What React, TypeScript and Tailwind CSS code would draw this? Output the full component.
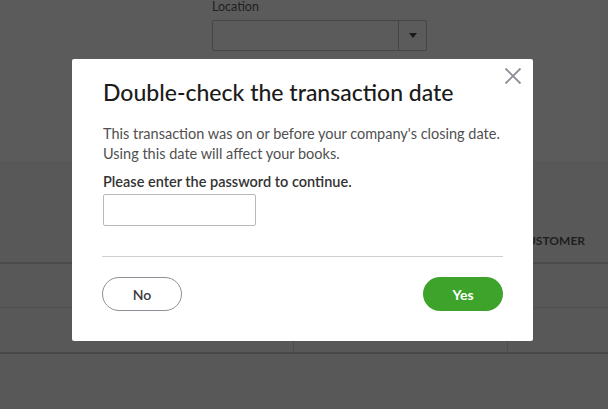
const font = { fontFamily: "Lato, 'Noto Sans', sans-serif" };

const Background = () => {
    return (
        <div className="w-full h-full flex flex-col bg-[#585858]">
            <div className="h-[161px] bg-[#5b5b5b] pl-[212px] pt-0">
                <div className="text-[12.5px] leading-[14px] text-[#1f1f1f]">Location</div>
                <div className="mt-[6px] w-[215px] h-[31px] border border-[#454545] rounded-[2px] flex">
                    <div className="flex-1"></div>
                    <div className="w-[28px] border-l border-[#454545] flex items-center justify-center">
                        <div className="w-0 h-0 border-l-[4px] border-r-[4px] border-t-[5px] border-l-transparent border-r-transparent border-t-[#1a1a1a]"></div>
                    </div>
                </div>
            </div>
            <div className="h-[101px] flex items-end justify-end pb-[12px] pr-[23px]">
                <span className="text-[12px] font-bold text-[#1e1e1e]">CUSTOMER</span>
            </div>
            <div className="h-[2px] bg-[#4b4b4b]"></div>
            <div className="h-[44px] border-b border-[#4d4d4d]"></div>
            <div className="h-[44px] flex">
                <div className="w-[294px] border-r border-dotted border-[#444]"></div>
                <div className="w-[214px] border-r border-dotted border-[#444]"></div>
                <div className="flex-1"></div>
            </div>
            <div className="h-[2px] bg-[#484848]"></div>
            <div className="flex-1"></div>
        </div>
    );
};

export default function App() {
    return (
        <div className="relative w-[608px] h-[409px] overflow-hidden" style={font}>
            <Background />
            <div className="absolute left-[72px] top-[59px] w-[461px] h-[282px] bg-white rounded-[2px] px-[30px] pt-[18px]">
                <button className="absolute left-[432px] top-[8px]">
                    <svg width="18" height="18" viewBox="0 0 18 18" fill="none" stroke="#8d9096" strokeWidth="1.8">
                        <path d="M1.5 1.5 16.5 16.5M16.5 1.5 1.5 16.5" />
                    </svg>
                </button>
                <h2 className="text-[23px] leading-[30px] text-[#1b1b1b] font-medium pl-[1px]">
                    Double-check the transaction date
                </h2>
                <p className="mt-[17px] text-[14.5px] leading-[20px] text-[#505050] pl-[1px]">
                    This transaction was on or before your company's closing date.
                    <br />
                    Using this date will affect your books.
                </p>
                <p className="mt-[8px] text-[14.5px] leading-[20px] font-semibold text-[#333] pl-[1px]">
                    Please enter the password to continue.
                </p>
                <input
                    type="password"
                    className="block mt-[2px] ml-[1px] w-[153px] h-[32px] border border-[#bababa] rounded-[2px] outline-none"
                />
                <div className="mt-[30px] h-px bg-[#cfcfcf]"></div>
                <div className="mt-[20px] flex justify-between">
                    <button className="w-[80px] h-[34px] rounded-full border border-[#8d9096] text-[14px] font-semibold text-[#393a3d]">
                        No
                    </button>
                    <button className="w-[80px] h-[34px] rounded-full bg-[#3da32b] text-[14px] font-bold text-white">
                        Yes
                    </button>
                </div>
            </div>
        </div>
    );
}
